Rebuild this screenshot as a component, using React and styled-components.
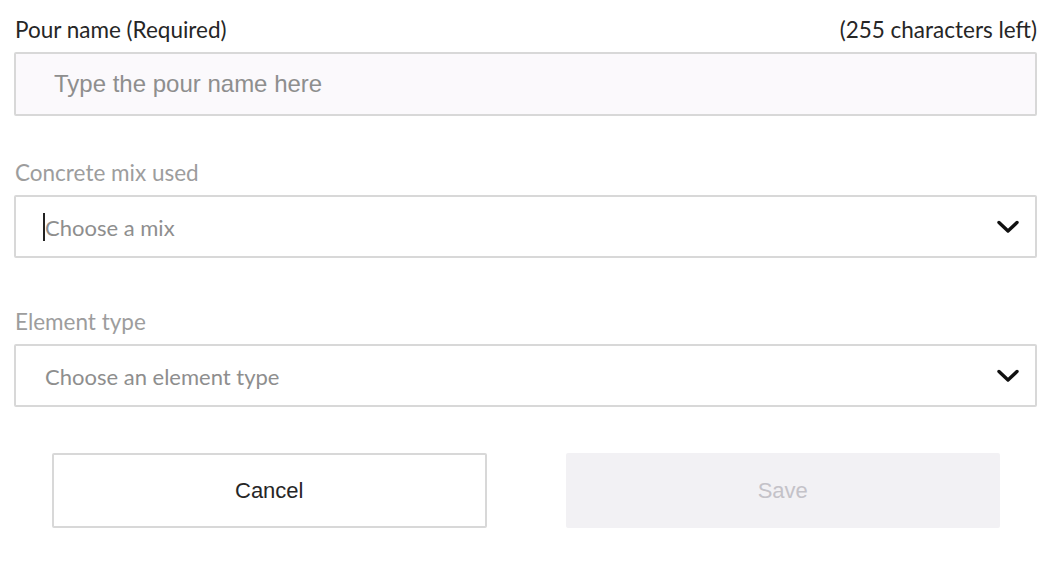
import React from "react"
import styled, { createGlobalStyle } from "styled-components"

const GlobalStyle = createGlobalStyle`
  body {
    margin: 0;
    background: #ffffff;
    font-family: Lato, "Noto Sans", sans-serif;
  }
`

const Chevron = () => (
  <svg width="24" height="14" viewBox="0 0 24 14">
    <polyline
      points="3,2.5 12,11 21,2.5"
      fill="none"
      stroke="#111"
      strokeWidth="3.4"
      strokeLinecap="round"
      strokeLinejoin="round"
    />
  </svg>
)

const App = () => (
  <>
    <GlobalStyle />
    <Form>
      <Field>
        <LabelRow>
          <Label>Pour name (Required)</Label>
          <Counter>(255 characters left)</Counter>
        </LabelRow>
        <TextInput placeholder="Type the pour name here" />
      </Field>

      <Field spacing={45}>
        <LabelRow>
          <Label muted>Concrete mix used</Label>
        </LabelRow>
        <Select>
          <Caret />
          <Placeholder>Choose a mix</Placeholder>
          <Chevron />
        </Select>
      </Field>

      <Field spacing={52}>
        <LabelRow>
          <Label muted>Element type</Label>
        </LabelRow>
        <Select>
          <Placeholder>Choose an element type</Placeholder>
          <Chevron />
        </Select>
      </Field>

      <Buttons>
        <Button>Cancel</Button>
        <Button disabled>Save</Button>
      </Buttons>
    </Form>
  </>
)

export default App

const Form = styled.div`
  display: flex;
  flex-direction: column;
  padding: 18px 17px 0 14px;
`
const Field = styled.div`
  display: flex;
  flex-direction: column;
  margin-top: ${(p) => p.spacing || 0}px;
`
const LabelRow = styled.div`
  display: flex;
  justify-content: space-between;
  align-items: center;
  margin-bottom: 10px;
`
const Label = styled.label`
  font-size: 22.5px;
  line-height: 24px;
  padding-left: 1px;
  color: ${(p) => (p.muted ? "#9d9d9d" : "#262626")};
`
const Counter = styled.span`
  font-size: 22.5px;
  line-height: 24px;
  color: #262626;
`
const TextInput = styled.input`
  box-sizing: border-box;
  height: 64px;
  width: 100%;
  border: 2px solid #d8d8d8;
  border-radius: 2px;
  background: #fbf9fc;
  padding: 0 38px;
  font-family: "Liberation Sans", Arial, sans-serif;
  font-size: 24px;
  outline: none;
  &::placeholder {
    color: #8e8e8e;
  }
`
const Select = styled.div`
  box-sizing: border-box;
  height: 63px;
  display: flex;
  align-items: center;
  border: 2px solid #d8d8d8;
  border-radius: 2px;
  background: #ffffff;
  padding: 1px 15px 0 29px;
`
const Caret = styled.span`
  width: 2px;
  height: 28px;
  margin-left: -2px;
  background: #222;
`
const Placeholder = styled.span`
  flex: 1;
  font-size: 22px;
  color: #8e8e8e;
`
const Buttons = styled.div`
  display: flex;
  gap: 79px;
  padding: 0 37px 0 38px;
  margin-top: 46px;
`
const Button = styled.button`
  flex: 1;
  height: 75px;
  border-radius: 2px;
  font-family: "Liberation Sans", Arial, sans-serif;
  font-size: 22px;
  cursor: pointer;
  border: 2px solid #d8d8d8;
  background: #ffffff;
  color: #262626;
  &:disabled {
    border-color: #f2f1f4;
    background: #f2f1f4;
    color: #c4c2c8;
    cursor: default;
  }
`
